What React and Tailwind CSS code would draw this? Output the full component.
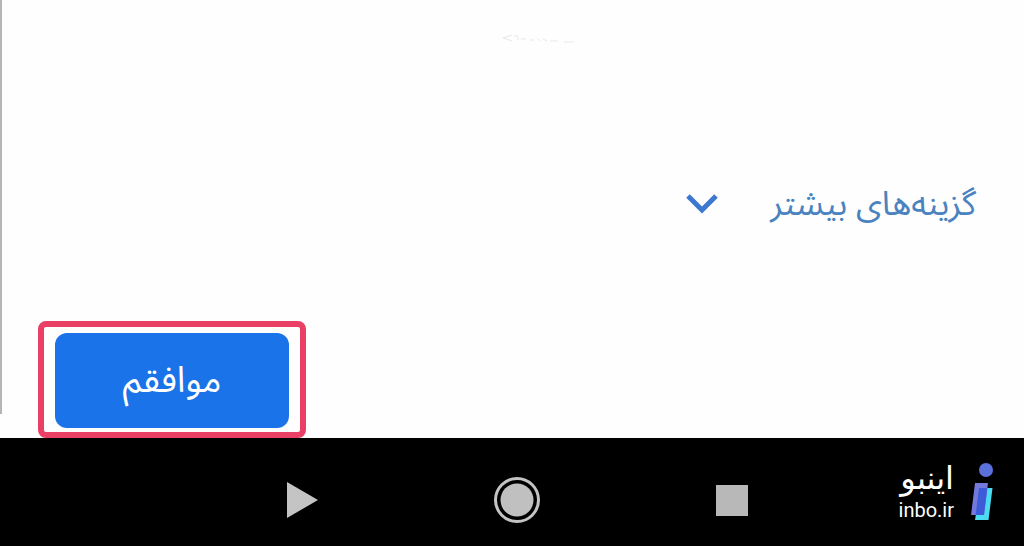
import { useState } from 'react'

function BrandMark() {
  return (
    <svg width="24" height="60" viewBox="0 0 24 60" aria-hidden="true">
      <circle cx="16" cy="8" r="7" fill="#5b72dd" />
      <path d="M10 26H22.500L18.500 58H5Z" fill="#4bdcf2" />
      <path d="M5 21H18L14 53H1Z" fill="#7278dc" />
      <path d="M9 26H17.400L14 53H5.600Z" fill="#3d5bd9" />
    </svg>
  )
}

export default function App() {
  const [open, setOpen] = useState(false)
  const navBtn = 'h-12 w-12 flex items-center justify-center'

  return (
    <div
      className="min-h-screen flex flex-col bg-[#fefefe] font-['Noto_Sans_Arabic','DejaVu_Sans',sans-serif]"
      dir="ltr"
    >
      <main className="flex-1 flex">
        <div className="w-0.5 mb-6 bg-[#b5b5b5]" />

        <div className="flex-1 flex flex-col pl-9 pr-12">
          {/* faint end of the scrolled text */}
          <svg className="ml-[49%] mt-8 h-4 w-20 text-gray-200" viewBox="0 0 80 16" fill="none" stroke="currentColor" aria-hidden="true">
            <path d="M14 3L5 6L14 9M16 4Q21 3 20 8M23 7H28M32 8H36M39 6L42 9M45 7L49 9M52 9H60M66 10H76" />
          </svg>

          {/* More options */}
          <button
            type="button"
            dir="rtl"
            aria-expanded={open}
            onClick={() => setOpen(!open)}
            className="self-start ml-auto mt-[124px] h-16 flex items-center gap-[52px] text-[34px] text-[#4a83bf]"
          >
            <span>گزینه‌های بیشتر</span>
            <svg width="32" height="22" viewBox="0 0 32 22" fill="none" stroke="#3c78cf" strokeWidth="5" aria-hidden="true">
              <path d="M2 3L16 17L30 3" />
            </svg>
          </button>

          <div className="mt-auto self-start border-6 border-[#ea4066] rounded-lg pt-1.5 pb-1 px-[11px]">
            <button
              type="button"
              dir="rtl"
              className="block h-[95px] w-[234px] rounded-xl bg-[#1a73e8] text-[36px] text-white"
            >
              موافقم
            </button>
          </div>
        </div>
      </main>

      {/* System navigation */}
      <footer className="h-[108px] bg-black flex items-center">
        <nav className="ml-[19%] w-[63%] grid grid-cols-3 justify-items-center pt-4">
          <button type="button" aria-label="Back" className={navBtn}>
            <svg width="32" height="36" viewBox="0 0 32 36" aria-hidden="true">
              <path d="M1 0L32 18L1 36Z" fill="#c4c4c4" />
            </svg>
          </button>
          <button type="button" aria-label="Home" className={navBtn}>
            <svg width="48" height="48" viewBox="0 0 48 48" aria-hidden="true">
              <circle cx="24" cy="24" r="21.500" fill="none" stroke="#c4c4c4" strokeWidth="3" />
              <circle cx="24" cy="24" r="16.500" fill="#c0c0c0" />
            </svg>
          </button>
          <button type="button" aria-label="Recents" className={navBtn}>
            <span className="h-[31px] w-8 bg-[#b8b8b8]" />
          </button>
        </nav>

        <a href="https://inbo.ir" className="ml-auto mr-[30px] flex items-center gap-4 text-white">
          <span className="flex flex-col items-end">
            <span className="font-['DejaVu_Sans',sans-serif] text-[32px] leading-9" dir="rtl">اینبو</span>
            <span className="font-['Roboto',sans-serif] text-xl leading-7">inbo.ir</span>
          </span>
          <BrandMark />
        </a>
      </footer>
    </div>
  )
}
